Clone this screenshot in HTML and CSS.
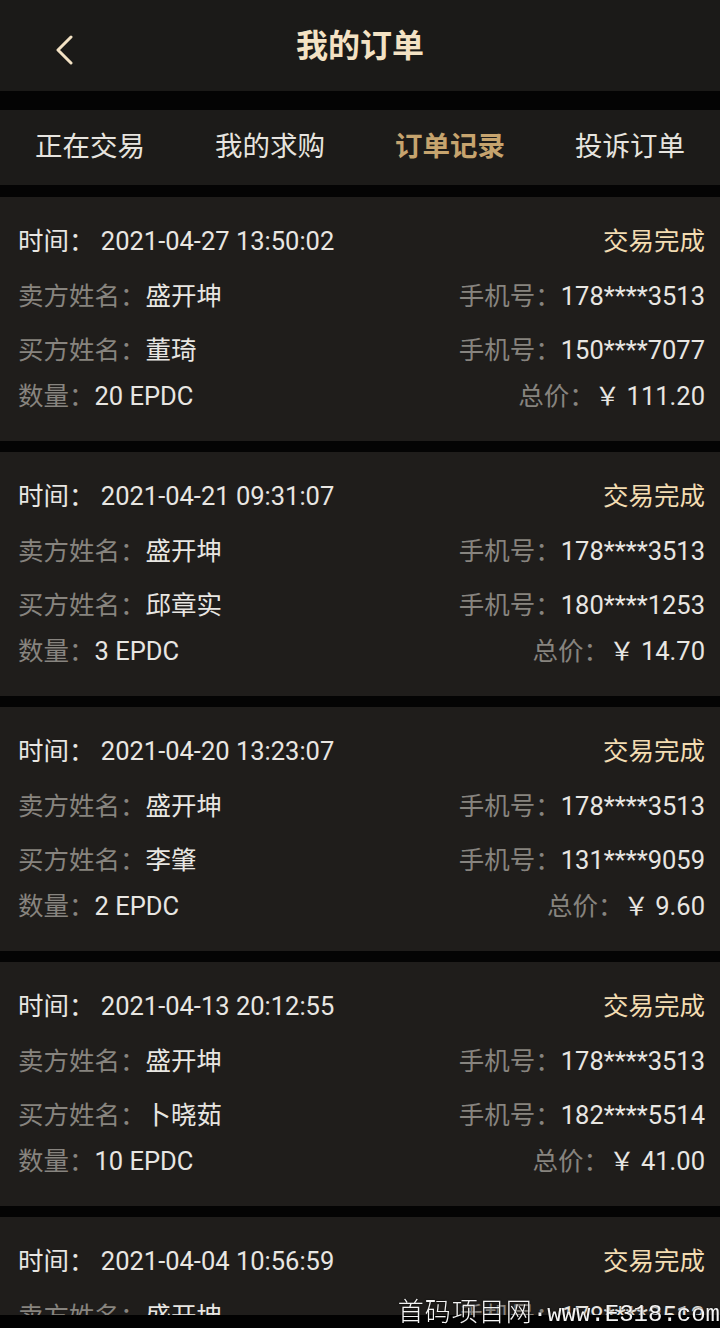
FILE: index.html
```html
<!DOCTYPE html>
<html lang="zh-CN">
<head>
    <meta charset="UTF-8">
    <meta name="viewport" content="width=device-width, initial-scale=1.0">
    <title>我的订单</title>
    <link rel="stylesheet" href="styles.css">
</head>
<body>
    <div class="topo">
        <div class="voltar">
            <svg width="20" height="30" viewBox="0 0 20 30">
                <path d="M16 2 L3 15 L16 28" fill="none" stroke="#f3e2c4" stroke-width="3" stroke-linecap="round" stroke-linejoin="round"/>
            </svg>
        </div>
        <div class="titulo">我的订单</div>
        <div></div>
    </div>

    <div class="abas">
        <div class="aba">正在交易</div>
        <div class="aba">我的求购</div>
        <div class="aba ativa">订单记录</div>
        <div class="aba">投诉订单</div>
    </div>

    <div class="lista">
        <div class="pedido">
            <div class="linha l1">
                <span class="valor">时间： 2021-04-27 13:50:02</span>
                <span class="status">交易完成</span>
            </div>
            <div class="linha l2">
                <span><span class="rotulo">卖方姓名：</span><span class="valor">盛开坤</span></span>
                <span><span class="rotulo">手机号：</span><span class="valor">178****3513</span></span>
            </div>
            <div class="linha l3">
                <span><span class="rotulo">买方姓名：</span><span class="valor">董琦</span></span>
                <span><span class="rotulo">手机号：</span><span class="valor">150****7077</span></span>
            </div>
            <div class="linha l4">
                <span><span class="rotulo">数量：</span><span class="valor">20 EPDC</span></span>
                <span><span class="rotulo">总价：</span><span class="valor">￥ 111.20</span></span>
            </div>
        </div>

        <div class="pedido">
            <div class="linha l1">
                <span class="valor">时间： 2021-04-21 09:31:07</span>
                <span class="status">交易完成</span>
            </div>
            <div class="linha l2">
                <span><span class="rotulo">卖方姓名：</span><span class="valor">盛开坤</span></span>
                <span><span class="rotulo">手机号：</span><span class="valor">178****3513</span></span>
            </div>
            <div class="linha l3">
                <span><span class="rotulo">买方姓名：</span><span class="valor">邱章实</span></span>
                <span><span class="rotulo">手机号：</span><span class="valor">180****1253</span></span>
            </div>
            <div class="linha l4">
                <span><span class="rotulo">数量：</span><span class="valor">3 EPDC</span></span>
                <span><span class="rotulo">总价：</span><span class="valor">￥ 14.70</span></span>
            </div>
        </div>

        <div class="pedido">
            <div class="linha l1">
                <span class="valor">时间： 2021-04-20 13:23:07</span>
                <span class="status">交易完成</span>
            </div>
            <div class="linha l2">
                <span><span class="rotulo">卖方姓名：</span><span class="valor">盛开坤</span></span>
                <span><span class="rotulo">手机号：</span><span class="valor">178****3513</span></span>
            </div>
            <div class="linha l3">
                <span><span class="rotulo">买方姓名：</span><span class="valor">李肇</span></span>
                <span><span class="rotulo">手机号：</span><span class="valor">131****9059</span></span>
            </div>
            <div class="linha l4">
                <span><span class="rotulo">数量：</span><span class="valor">2 EPDC</span></span>
                <span><span class="rotulo">总价：</span><span class="valor">￥ 9.60</span></span>
            </div>
        </div>

        <div class="pedido">
            <div class="linha l1">
                <span class="valor">时间： 2021-04-13 20:12:55</span>
                <span class="status">交易完成</span>
            </div>
            <div class="linha l2">
                <span><span class="rotulo">卖方姓名：</span><span class="valor">盛开坤</span></span>
                <span><span class="rotulo">手机号：</span><span class="valor">178****3513</span></span>
            </div>
            <div class="linha l3">
                <span><span class="rotulo">买方姓名：</span><span class="valor">卜晓茹</span></span>
                <span><span class="rotulo">手机号：</span><span class="valor">182****5514</span></span>
            </div>
            <div class="linha l4">
                <span><span class="rotulo">数量：</span><span class="valor">10 EPDC</span></span>
                <span><span class="rotulo">总价：</span><span class="valor">￥ 41.00</span></span>
            </div>
        </div>

        <div class="pedido">
            <div class="linha l1">
                <span class="valor">时间： 2021-04-04 10:56:59</span>
                <span class="status">交易完成</span>
            </div>
            <div class="linha l2">
                <span><span class="rotulo">卖方姓名：</span><span class="valor">盛开坤</span></span>
                <span><span class="rotulo">手机号：</span><span class="valor">178****3513</span></span>
            </div>
        </div>
    </div>

    <div class="rodape"></div>
    <div class="marca"><span class="marca-cn">首码项目网</span>·www.E318.com</div>
</body>
</html>
```

FILE: styles.css
```css
body {
  margin: 0;
  width: 720px;
  height: 1328px;
  overflow: hidden;
  background: #040404;
  font-family: Roboto, "Noto Sans CJK SC", sans-serif;
  color: #e8e6e2;
}

.topo {
  display: grid;
  grid-template-columns: 120px 1fr 120px;
  align-items: center;
  height: 91px;
  background: #1b1a18;
}

.voltar {
  padding-left: 55px;
  padding-top: 12px;
}

.titulo {
  text-align: center;
  font-size: 32px;
  font-weight: 700;
  color: #f3e2c4;
  margin-top: -6px;
}

.abas {
  display: grid;
  grid-template-columns: repeat(4, 1fr);
  align-items: center;
  height: 75px;
  margin-top: 19px;
  background: #1c1b19;
}

.aba {
  text-align: center;
  font-size: 27.5px;
  color: #e6e4df;
  margin-top: -8px;
}

.ativa {
  color: #c6a46e;
  font-weight: 700;
}

.lista {
  display: flex;
  flex-direction: column;
  gap: 11px;
  margin-top: 12px;
}

.pedido {
  background: #1f1d1b;
  height: 244px;
  box-sizing: border-box;
  padding: 29px 15px 0 18px;
  flex-shrink: 0;
}

.linha {
  display: flex;
  justify-content: space-between;
  align-items: center;
  font-size: 25.5px;
  line-height: 30px;
}

.l2 { margin-top: 25px; }
.l3 { margin-top: 24px; }
.l4 { margin-top: 16px; }

.rotulo {
  color: #87847f;
}

.valor {
  color: #e8e6e2;
}

.status {
  color: #f2dcb2;
}

.rodape {
  position: fixed;
  left: 0;
  right: 0;
  bottom: 0;
  height: 13px;
  background: #020202;
}

.marca {
  position: fixed;
  right: 0;
  bottom: -4px;
  font-family: "Liberation Mono", monospace;
  font-size: 24px;
  line-height: 34px;
  color: #f4f4f4;
  white-space: nowrap;
  text-shadow: 0 0 2px #000;
}

.marca-cn {
  font-family: "Noto Sans CJK SC", sans-serif;
  font-size: 26px;
  font-weight: 300;
  letter-spacing: 1px;
}
```
